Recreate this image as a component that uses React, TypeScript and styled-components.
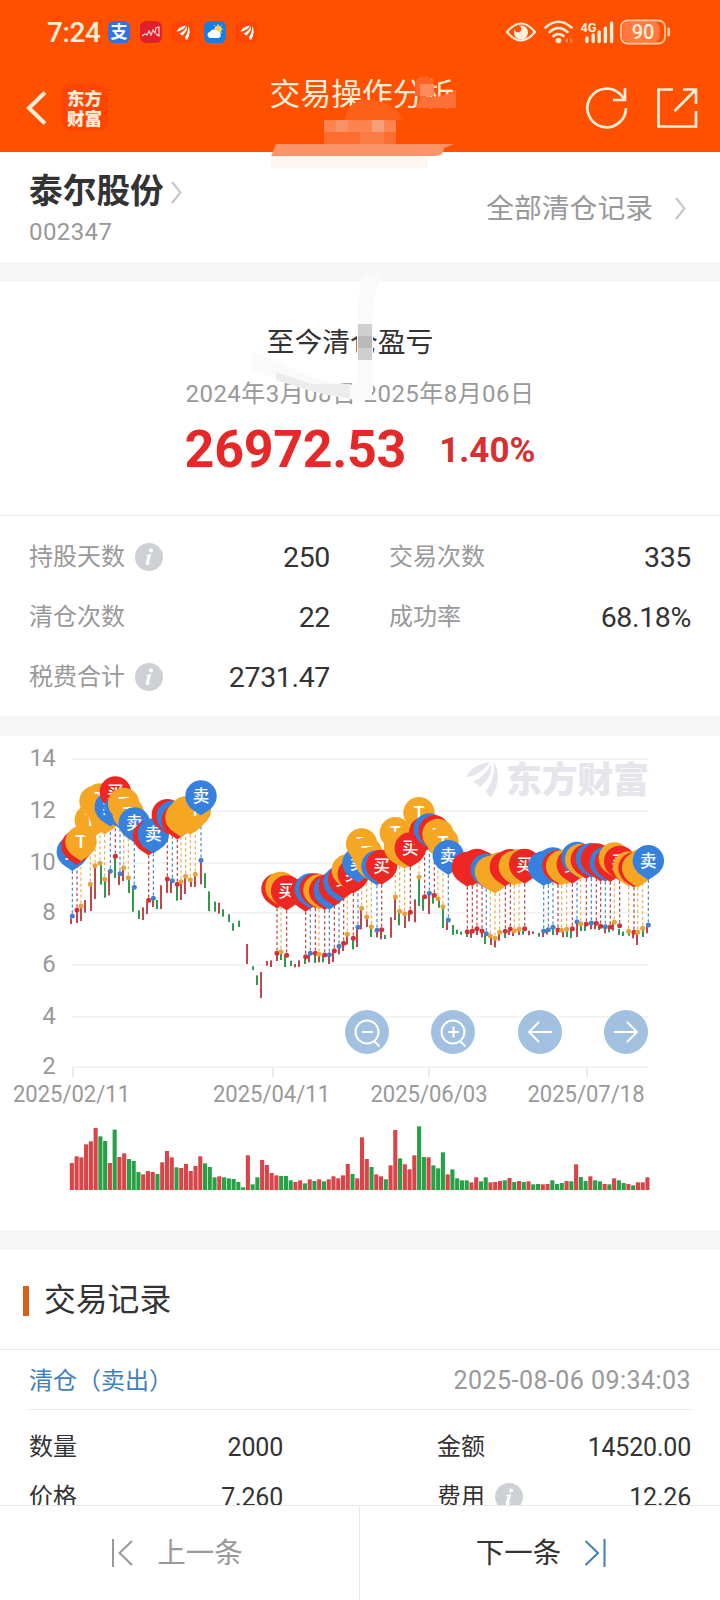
import React from "react";
import styled, { createGlobalStyle } from "styled-components";

const GlobalStyle = createGlobalStyle`
  * { box-sizing: border-box; }
  body { margin: 0; background: #fff; }
`;

const FONT = 'Roboto, "Noto Sans CJK SC", sans-serif';
const CREAM = "#ffeeda";

const Page = styled.div`
  position: relative;
  width: 720px;
  height: 1600px;
  overflow: hidden;
  display: flex;
  flex-direction: column;
  background: #fff;
  font-family: ${FONT};
  color: #333;
  line-height: 1;
`;

const Header = styled.header`
  flex: none;
  height: 152px;
  background: #ff5000;
  color: ${CREAM};
`;

const StatusBar = styled.div`
  height: 64px;
  padding: 0 49px 0 47px;
  display: flex;
  align-items: center;
  justify-content: space-between;
`;

const StatusGroup = styled.div`
  display: flex;
  align-items: center;
`;

const Clock = styled.span`
  width: 61px;
  padding-top: 2px;
  font-size: 28px;
  font-weight: 500;
  letter-spacing: -0.4px;
`;

const AppIcons = styled.div`
  display: flex;
  gap: 10px;
`;

const AppIcon = styled.span<{ $bg: string }>`
  width: 22px;
  height: 22px;
  border-radius: 6px;
  background: ${(p) => p.$bg};
  color: #fff;
  font-size: 17px;
  font-weight: 700;
  display: flex;
  align-items: center;
  justify-content: center;
`;

const NavBar = styled.div`
  height: 88px;
  padding: 0 22px 0 26px;
  display: flex;
  justify-content: space-between;
`;

const NavLeft = styled.div`
  width: 112px;
  display: flex;
  gap: 15px;
  padding-top: 20px;
`;

const Brand = styled.div`
  width: 47px;
  height: 47px;
  border-radius: 11px;
  background: #ff4503;
  display: flex;
  flex-direction: column;
  align-items: center;
  justify-content: center;
  font: 900 17.5px/20px "Noto Sans CJK SC", sans-serif;
`;

const Title = styled.h1`
  margin: 15px 0 0;
  white-space: nowrap;
  font-size: 30.8px;
  line-height: 32px;
  font-weight: 400;
`;

const NavRight = styled.div`
  width: 112px;
  display: flex;
  justify-content: space-between;
  padding-top: 22px;
`;

const StockRow = styled.section`
  flex: none;
  height: 110px;
  padding: 4px 34px 0 29px;
  display: flex;
  justify-content: space-between;
  align-items: center;
`;

const StockName = styled.div`
  display: flex;
  align-items: center;
  gap: 7px;
  height: 40px;
  font-size: 33.7px;
  font-weight: 700;
`;

const StockCode = styled.div`
  margin-top: 6px;
  height: 28px;
  line-height: 28px;
  font-size: 24px;
  letter-spacing: 0.4px;
  color: #999;
`;

const AllRecords = styled.div`
  display: flex;
  align-items: center;
  gap: 22px;
  font-size: 27.8px;
  color: #999;
`;

const Gap = styled.div`
  flex: none;
  height: 20px;
  background: #f7f7f7;
`;

const Summary = styled.section`
  flex: none;
  height: 234px;
  border-bottom: 1px solid #e8e8e8;
  display: flex;
  flex-direction: column;
  align-items: center;
`;

const SummaryTitle = styled.div`
  margin: 45px 20px 0 0;
  font-size: 27.8px;
  line-height: 32px;
`;

const Period = styled.div`
  margin-top: 21px;
  font-size: 24px;
  line-height: 28px;
  letter-spacing: 0.45px;
  color: #999;
`;

const Profit = styled.div`
  margin-top: 11px;
  display: flex;
  align-items: center;
  gap: 33px;
  height: 62px;
  font-weight: 700;
  color: #e62828;
`;

const Amount = styled.span`
  font-size: 52px;
  letter-spacing: -0.3px;
`;

const Rate = styled.span`
  font-size: 35px;
  color: #d63030;
`;

const Stats = styled.section`
  flex: none;
  height: 200px;
  padding: 11px 29px 0;
  display: grid;
  grid-template-columns: 301px 302px;
  grid-auto-rows: 60px;
  column-gap: 59px;
`;

const Stat = styled.div`
  display: flex;
  align-items: center;
  justify-content: space-between;
`;

const Label = styled.span<{ $dark?: boolean }>`
  display: flex;
  align-items: center;
  gap: 10px;
  font-size: 24px;
  color: ${(p) => (p.$dark ? "#333" : "#999")};
`;

const StatValue = styled.span`
  padding-top: 2px;
  font-size: 28.5px;
  letter-spacing: -0.35px;
`;

const ChartSection = styled.section`
  position: relative;
  flex: none;
  height: 494px;
`;

const ChartControls = styled.div`
  position: absolute;
  left: 345px;
  right: 72px;
  top: 274px;
  display: flex;
  justify-content: space-between;
`;

const RoundButton = styled.button`
  width: 44px;
  height: 44px;
  padding: 0;
  border: 0;
  border-radius: 50%;
  background: rgba(139, 177, 218, 0.8);
`;

const SectionTitle = styled.h2`
  flex: none;
  margin: 0;
  height: 100px;
  padding: 2px 0 0 23px;
  border-bottom: 1px solid #e8e8e8;
  display: flex;
  align-items: center;
  gap: 15px;
  font-size: 31.8px;
  font-weight: 400;
  &::before {
    content: "";
    width: 6px;
    height: 30px;
    background: #d9601a;
  }
`;

const RecordHead = styled.div`
  flex: none;
  margin: 0 29px;
  padding-top: 2px;
  height: 60px;
  border-bottom: 1px solid #e8e8e8;
  display: flex;
  align-items: center;
  justify-content: space-between;
  font-size: 24px;
  color: #4080c0;
`;

const Time = styled.time`
  color: #999;
  font-size: 25px;
  letter-spacing: 0.45px;
`;

const RecordGrid = styled.div`
  flex: 1;
  min-height: 0;
  overflow: hidden;
  padding: 12px 29px 0;
  display: grid;
  grid-template-columns: 254px 254px;
  grid-auto-rows: 50px;
  justify-content: space-between;
`;

const RecordValue = styled.span`
  font-size: 25px;
  letter-spacing: -0.2px;
`;

const Footer = styled.footer`
  flex: none;
  height: 95px;
  border-top: 1px solid #e8e8e8;
  display: grid;
  grid-template-columns: 360px 360px;
  background: #fff;
`;

const FooterButton = styled.button<{ $muted?: boolean }>`
  border: 0;
  border-right: ${(p) => (p.$muted ? "1px solid #e8e8e8" : "0")};
  background: none;
  padding: ${(p) => (p.$muted ? "0 5px 0 0" : "0 0 0 3px")};
  display: flex;
  align-items: center;
  justify-content: center;
  gap: 23px;
  font: 400 28.5px/1 ${FONT};
  color: ${(p) => (p.$muted ? "#999" : "#333")};
`;

const FooterText = styled.span`
  padding-top: 3px;
`;

const Smudge = styled.svg`
  position: absolute;
  left: 0;
  top: 0;
  pointer-events: none;
`;

const Chevron = () => (
  <svg width="11" height="23" viewBox="0 0 11 23" fill="none">
    <path d="M1 1 L9.5 11.5 L1 22" stroke="#c4c4c4" strokeWidth="2" />
  </svg>
);

const Info = () => (
  <svg width="28" height="28" viewBox="0 0 28 28">
    <circle cx="14" cy="14" r="14" fill="#cdd1d6" />
    <circle cx="16" cy="7.4" r="2" fill="#fff" />
    <path
      d="M11 12.2 Q14 11.6 16.3 11 L13.9 19.4 Q13.5 21 14.8 20.3 L16.5 18.8 Q14.6 22.2 12.2 22.3 Q10.2 22.2 10.9 19.5 L12.7 13.3 Q12.5 12.8 11 12.9 Z"
      fill="#fff"
    />
  </svg>
);

const FeatherPaths = () => (
  <>
    <path d="M0 16 Q5 4 24 1 Q19 9 9 14 Q5 15.5 0 16 Z" />
    <path d="M7 21 Q21 14 24.5 3 Q28 14 14 26 Q11 22.5 7 21 Z" />
    <path d="M28 1 Q37 17 25.5 36 Q22 35 20 30 Q29.5 18 28 1 Z" />
  </>
);

const Feather = () => (
  <svg width="15" height="15" viewBox="0 0 34 36" fill="#fff">
    <FeatherPaths />
  </svg>
);

type Kind = "B" | "S" | "T";
type Marker = [number, number, Kind];

const PIN: Record<Kind, { fill: string; line: string; dot: string; text: string }> = {
  B: { fill: "#ee2722", line: "#c43c42", dot: "#cf3136", text: "买" },
  S: { fill: "#3681de", line: "#4a86cc", dot: "#477fc6", text: "卖" },
  T: { fill: "#f5a623", line: "#e2b252", dot: "#e5a13a", text: "T" },
};

/* Each block holds positions in thirds of a pixel from its own origin. */
const place = (ox: number, oy: number, list: Marker[]): Marker[] =>
  list.map(([x, y, k]) => [ox + x / 3, oy + y / 3, k]);

const MARKERS: Marker[] = [
  ...place(0, 740, [
    [217, 528, "S"], [231, 510, "B"], [243, 498, "T"], [271, 433, "T"], [285, 377, "T"], [300, 370, "T"],
    [314, 418, "T"], [331, 394, "S"], [346, 349, "B"], [360, 401, "S"], [371, 383, "T"], [385, 413, "T"],
    [403, 442, "S"], [446, 481, "B"], [460, 475, "S"], [502, 417, "B"], [517, 422, "S"], [532, 433, "B"],
    [543, 425, "T"], [557, 409, "T"], [571, 419, "T"], [586, 403, "T"], [603, 361, "S"],
  ]),
  ...place(240, 800, [
    [111, 460, "B"], [123, 455, "T"], [140, 466, "B"], [197, 470, "B"], [211, 460, "S"], [226, 460, "B"],
    [237, 463, "T"], [254, 465, "B"], [268, 464, "S"], [283, 452, "B"], [297, 439, "S"], [311, 430, "B"],
    [322, 403, "T"], [340, 415, "B"], [354, 382, "S"], [365, 325, "T"], [380, 351, "T"], [394, 380, "T"],
    [411, 391, "S"], [425, 389, "B"], [466, 291, "T"], [479, 334, "T"], [494, 341, "T"], [511, 337, "B"],
    [537, 231, "T"], [554, 290, "B"], [568, 280, "S"], [583, 286, "B"], [594, 296, "T"], [609, 320, "T"],
    [625, 360, "S"], [682, 395, "B"],
  ]),
  ...place(470, 740, [
    [7, 573, "B"], [21, 566, "B"], [36, 573, "B"], [49, 581, "S"], [61, 588, "T"], [75, 595, "T"],
    [89, 577, "T"], [106, 574, "B"], [121, 567, "B"], [133, 572, "T"], [147, 568, "T"], [164, 566, "B"],
    [221, 573, "S"], [235, 569, "S"], [249, 562, "S"], [264, 570, "B"], [275, 571, "T"], [290, 568, "T"],
    [307, 566, "B"], [321, 545, "S"], [332, 551, "T"], [349, 552, "B"], [364, 549, "S"], [379, 550, "B"],
    [392, 559, "B"], [406, 560, "S"], [421, 561, "B"], [433, 547, "T"], [449, 557, "B"], [476, 574, "T"],
    [492, 577, "B"], [503, 577, "T"], [518, 565, "T"], [535, 555, "S"],
  ]),
];

/* A pin shows its label unless a later pin covers it completely. */
const labelled = (i: number) =>
  !MARKERS.slice(i + 1).some(([x, y]) => Math.hypot(x - MARKERS[i][0], y - MARKERS[i][1]) < 7);

type Candle = [number, number, number, "r" | "g"];
const placeC = (ox: number, oy: number, list: Candle[]): Candle[] =>
  list.map(([x, a, b, c]) => [ox + x / 3, oy + a / 3, oy + b / 3, c]);

const CANDLES: Candle[] = [
  ...placeC(0, 740, [
    [213, 535, 552, "r"], [231, 514, 549, "r"], [243, 502, 543, "r"], [255, 480, 518, "r"], [273, 436, 513, "r"],
    [285, 380, 477, "r"], [303, 372, 434, "g"], [315, 420, 473, "g"], [327, 397, 466, "r"], [345, 350, 414, "g"],
    [357, 405, 435, "r"], [369, 390, 423, "r"], [387, 415, 459, "g"], [399, 445, 515, "g"], [417, 511, 537, "g"],
    [429, 502, 540, "r"], [441, 485, 522, "r"], [459, 475, 501, "r"], [471, 480, 507, "g"], [483, 436, 507, "r"],
    [501, 418, 459, "r"], [513, 424, 459, "r"], [531, 435, 482, "g"], [543, 425, 480, "r"], [555, 410, 462, "r"],
    [573, 420, 441, "r"], [585, 405, 441, "r"], [603, 365, 433, "r"], [615, 400, 444, "g"], [627, 454, 513, "g"],
    [645, 485, 515, "g"], [657, 488, 521, "r"], [669, 508, 530, "g"], [687, 523, 546, "g"], [699, 550, 572, "g"],
    [717, 542, 561, "g"],
  ]),
  ...placeC(240, 800, [
    [21, 432, 492, "r"], [39, 499, 510, "g"], [51, 526, 555, "g"], [63, 516, 594, "r"], [81, 483, 497, "r"],
    [93, 481, 501, "r"], [111, 460, 483, "r"], [123, 455, 480, "g"], [135, 468, 501, "g"], [153, 482, 498, "g"],
    [165, 492, 502, "r"], [177, 481, 501, "r"], [195, 472, 492, "g"], [207, 465, 487, "r"], [225, 460, 489, "g"],
    [237, 463, 487, "r"], [249, 465, 487, "g"], [267, 465, 492, "r"], [279, 455, 486, "r"], [297, 440, 463, "r"],
    [309, 430, 453, "r"], [321, 405, 434, "r"], [339, 415, 448, "g"], [351, 382, 441, "r"], [363, 327, 388, "r"],
    [381, 352, 381, "r"], [393, 382, 411, "g"], [411, 392, 412, "r"], [423, 388, 418, "r"], [435, 405, 417, "g"],
    [453, 352, 413, "r"], [465, 295, 360, "r"], [477, 335, 376, "g"], [495, 343, 384, "r"], [507, 340, 364, "r"],
    [525, 298, 367, "r"], [537, 235, 318, "g"], [549, 290, 332, "g"], [567, 282, 342, "r"], [579, 290, 311, "g"],
    [597, 297, 323, "g"], [609, 320, 384, "g"], [621, 365, 390, "r"], [639, 375, 405, "g"], [651, 389, 402, "g"],
    [663, 395, 404, "g"], [681, 398, 411, "g"], [693, 395, 413, "r"],
  ]),
  ...placeC(470, 740, [
    [3, 575, 592, "r"], [21, 570, 585, "r"], [36, 575, 592, "r"], [45, 585, 612, "g"], [63, 590, 615, "r"],
    [75, 595, 622, "r"], [87, 578, 602, "r"], [105, 577, 594, "g"], [117, 572, 585, "r"], [129, 572, 588, "r"],
    [147, 572, 585, "r"], [159, 572, 584, "g"], [177, 572, 586, "r"], [189, 574, 582, "r"], [207, 579, 590, "g"],
    [219, 575, 591, "r"], [231, 572, 583, "r"], [249, 565, 585, "g"], [261, 568, 585, "r"], [279, 572, 592, "r"],
    [291, 570, 591, "g"], [303, 568, 594, "g"], [321, 548, 591, "r"], [333, 553, 573, "g"], [345, 555, 573, "g"],
    [363, 552, 568, "r"], [375, 552, 568, "r"], [387, 560, 570, "g"], [405, 562, 580, "r"], [417, 562, 577, "g"],
    [429, 548, 572, "r"], [447, 567, 585, "g"], [459, 575, 588, "g"], [477, 575, 587, "g"], [489, 577, 595, "r"],
    [501, 578, 615, "r"], [519, 568, 591, "g"], [531, 560, 580, "r"],
  ]),
];

/* Bar heights in thirds of a pixel, prefixed by direction. */
const VOLUMES =
  "r81 r101 r98 r137 r146 r186 g161 g147 r81 g181 r99 r110 g93 g87 g54 r47 r57 r54 g48 r83 r117 r98 g68 r66 r78 r57 r72 r101 g80 g69 g38 r41 g38 g35 g33 g24 g8 r104 g17 g38 r90 r75 r51 r44 g42 g42 g29 r24 r29 g20 r32 g27 r32 g26 r32 r41 r35 r44 r78 g48 r35 r158 r93 g69 r47 r41 g32 r74 r180 g95 r77 r62 r104 g191 g99 r98 g74 g65 g113 r47 g62 g35 g29 g29 r23 r38 g26 g38 r23 r24 r27 g29 r36 g24 r27 g24 r26 g17 g18 r17 r18 g29 g18 g21 r27 g26 r77 g39 g27 r41 g29 g26 r18 g17 r35 g29 g21 r18 g14 r23 r23 r38".split(
    " ",
  );

const GRID: [number, number][] = [[14, 759], [12, 811], [10, 863], [8, 913], [6, 965], [4, 1017], [2, 1067]];
const DATES: [string, number, number][] = [
  ["2025/02/11", 71.5, 73],
  ["2025/04/11", 271.5, 273],
  ["2025/06/03", 429, 429],
  ["2025/07/18", 586, 587],
];

const Chart = () => (
  <svg width="720" height="494" viewBox="0 736 720 494" fontFamily={FONT}>
    {GRID.map(([v, y]) => (
      <g key={v}>
        <line x1="72" x2="648" y1={y} y2={y} stroke="#f4f4f5" strokeWidth="2" />
        <text x="55" y={y + 7} textAnchor="end" fontSize="24" letterSpacing="-0.8" fill="#999">
          {v}
        </text>
      </g>
    ))}
    {DATES.map(([d, x, tick]) => (
      <g key={d}>
        <line x1={tick} x2={tick} y1="1068" y2="1077" stroke="#ebebec" strokeWidth="2" />
        <text x={x} y="1102" textAnchor="middle" fontSize="24.3" textLength="117" lengthAdjust="spacingAndGlyphs" fill="#999">
          {d}
        </text>
      </g>
    ))}
    <g fill="#e5e5eb">
      <g transform="translate(466 761)">
        <FeatherPaths />
      </g>
      <text x="506" y="793" fontSize="36" fontWeight="900" textLength="143">
        东方财富
      </text>
    </g>
    {CANDLES.map(([x, a, b, c], i) => (
      <rect key={i} x={x - 1} y={a} width="2" height={b - a} fill={c === "r" ? "#bd474c" : "#2f9a4b"} />
    ))}
    {MARKERS.map(([x, y, k], i) => (
      <g key={i}>
        <line x1={x} x2={x} y1={y - 45} y2={y} stroke={PIN[k].line} strokeWidth="1.2" strokeDasharray="3 2.6" />
        <circle cx={x} cy={y} r="2.5" fill={PIN[k].dot} />
      </g>
    ))}
    {MARKERS.map(([x, y, k], i) => (
      <g key={i} transform={`translate(${x} ${y - 64.3})`}>
        <path
          d="M-12.97 8.85 A15.7 15.7 0 1 1 12.97 8.85 C9.5 14 4 16.5 0 19.3 C-4 16.5 -9.5 14 -12.97 8.85 Z"
          fill={PIN[k].fill}
        />
        {labelled(i) && (
          <text y="6.2" textAnchor="middle" fontSize={k === "T" ? 18 : 16.5} fontWeight="500" fill="#fff">
            {PIN[k].text}
          </text>
        )}
      </g>
    ))}
    {VOLUMES.map((v, i) => {
      const h = Number(v.slice(1)) / 3;
      return (
        <rect key={i} x={69.8 + i * 4.757} y={1190 - h} width="4.1" height={h} fill={v[0] === "r" ? "#da4347" : "#27a145"} />
      );
    })}
  </svg>
);

const ICONS = {
  out: "M29 31 L34.5 36.5 M17 22 H28",
  in: "M29 31 L34.5 36.5 M17 22 H28 M22.5 16.5 V27.5",
  left: "M34 22 H11 M21 12 L11 22 L21 32",
  right: "M10 22 H33 M23 12 L33 22 L23 32",
};

const ChartButton = ({ icon }: { icon: keyof typeof ICONS }) => (
  <RoundButton>
    <svg width="44" height="44" viewBox="0 0 44 44" fill="none" stroke="#fff" strokeWidth="2">
      {(icon === "in" || icon === "out") && <circle cx="22" cy="22" r="11.5" />}
      <path d={ICONS[icon]} />
    </svg>
  </RoundButton>
);

const StatusIcons = () => (
  <svg width="166" height="28" viewBox="505 18 166 28" fill="none" stroke={CREAM}>
    <path d="M507 32 Q521 15 535 32 Q521 49 507 32 Z" strokeWidth="2.2" />
    <circle cx="521" cy="32.5" r="7" fill={CREAM} stroke="none" />
    <circle cx="518" cy="29" r="3.2" fill="#ff5000" stroke="none" />
    <g strokeWidth="2.6" strokeLinecap="round">
      <path d="M545.5 27.5 Q558.5 16 571.5 27.5" />
      <path d="M549.5 32 Q558.5 24 567.5 32" />
      <path d="M553.5 36 Q558.5 32 563.5 36" />
    </g>
    <circle cx="558.5" cy="40.5" r="2.8" fill={CREAM} stroke="none" />
    <path d="M568 37.5 l-3 3 3 3z M570 37.5 l3 3 -3 3z" fill="#ff8650" stroke="none" />
    <text x="580.5" y="31.5" fontSize="12.5" fontWeight="700" fill={CREAM} stroke="none" textLength="16" lengthAdjust="spacingAndGlyphs">
      4G
    </text>
    <path d="M587 38 V41.5 M593.2 35 V41.5 M599.2 32 V41.5 M605.4 28 V41.5 M611.6 23 V41.5" strokeWidth="3.4" strokeLinecap="round" />
    <rect x="621" y="20.5" width="44" height="23" rx="6.5" fill="#ff5000" strokeWidth="1.8" stroke="#ffc8a0" />
    <rect x="622.5" y="22" width="37" height="20" rx="5" fill="#ff7a40" stroke="none" />
    <path d="M668.7 29 V35" strokeWidth="2.8" strokeLinecap="round" stroke="#ffc8a0" />
    <text x="643" y="39.3" fontSize="20" fontWeight="500" textAnchor="middle" fill={CREAM} stroke="none">
      90
    </text>
  </svg>
);

export default function App() {
  return (
    <Page>
      <GlobalStyle />
      <Header>
        <StatusBar>
          <StatusGroup>
            <Clock>7:24</Clock>
            <AppIcons>
              <AppIcon $bg="#2f74df">支</AppIcon>
              <AppIcon $bg="#e0202c">
                <svg width="20" height="12" viewBox="0 0 20 12" fill="none" stroke="#ffd9d9" strokeWidth="1.2">
                  <path d="M1 10 L4 8 L6 9 L8 5 L10 9 L12 4 L14 7 L15 2 L18 1 V10 L15 8" />
                </svg>
              </AppIcon>
              <AppIcon $bg="#ff4503"><Feather /></AppIcon>
              <AppIcon $bg="#137fe6">
                <svg width="20" height="20" viewBox="0 0 20 20">
                  <path d="M13 2v2M18 7h-2M17 3l-1.5 1.5M9 3l1.2 1.2M17 11l-1.5-1" stroke="#ffd45c" />
                  <circle cx="13" cy="7.4" r="3.6" fill="#ffd45c" />
                  <path d="M5.5 16 A3.2 3.2 0 0 1 5 9.7 A4.5 4.5 0 0 1 12.8 9.6 A3.3 3.3 0 0 1 13.6 16 Z" fill="#fff" />
                </svg>
              </AppIcon>
              <AppIcon $bg="#ff4503"><Feather /></AppIcon>
            </AppIcons>
          </StatusGroup>
          <StatusIcons />
        </StatusBar>
        <NavBar>
          <NavLeft>
            <svg width="20" height="47" viewBox="0 0 20 47" fill="none" stroke={CREAM} strokeWidth="4">
              <path d="M19 8.5 L3 24 L19 39.5" />
            </svg>
            <Brand>
              <span>东方</span>
              <span>财富</span>
            </Brand>
          </NavLeft>
          <Title>交易操作分析</Title>
          <NavRight>
            <svg width="42" height="44" viewBox="0 0 42 44" fill="none" stroke={CREAM} strokeWidth="2.7">
              <path d="M40 22 A19.3 19.3 0 1 1 35 9 L39 14" />
              <path d="M39 2 V14 H27" />
            </svg>
            <svg width="42" height="44" viewBox="0 0 42 44" fill="none" stroke={CREAM} strokeWidth="2.7">
              <path d="M17 3.5 H2.5 V40.5 H40 V25" />
              <path d="M27 3.5 H40 V18 M39 4.5 L18.5 25" />
            </svg>
          </NavRight>
        </NavBar>
      </Header>

      <StockRow>
        <div>
          <StockName>
            泰尔股份
            <Chevron />
          </StockName>
          <StockCode>002347</StockCode>
        </div>
        <AllRecords>
          全部清仓记录
          <Chevron />
        </AllRecords>
      </StockRow>
      <Gap />

      <Summary>
        <SummaryTitle>至今清仓盈亏</SummaryTitle>
        <Period>2024年3月08日-2025年8月06日</Period>
        <Profit>
          <Amount>26972.53</Amount>
          <Rate>1.40%</Rate>
        </Profit>
      </Summary>
      <Stats>
        <Stat><Label>持股天数<Info /></Label><StatValue>250</StatValue></Stat>
        <Stat><Label>交易次数</Label><StatValue>335</StatValue></Stat>
        <Stat><Label>清仓次数</Label><StatValue>22</StatValue></Stat>
        <Stat><Label>成功率</Label><StatValue>68.18%</StatValue></Stat>
        <Stat><Label>税费合计<Info /></Label><StatValue>2731.47</StatValue></Stat>
      </Stats>
      <Gap />

      <ChartSection>
        <Chart />
        <ChartControls>
          <ChartButton icon="out" />
          <ChartButton icon="in" />
          <ChartButton icon="left" />
          <ChartButton icon="right" />
        </ChartControls>
      </ChartSection>
      <Gap />

      <SectionTitle>交易记录</SectionTitle>
      <RecordHead>
        清仓（卖出）
        <Time>2025-08-06 09:34:03</Time>
      </RecordHead>
      <RecordGrid>
        <Stat><Label $dark>数量</Label><RecordValue>2000</RecordValue></Stat>
        <Stat><Label $dark>金额</Label><RecordValue>14520.00</RecordValue></Stat>
        <Stat><Label $dark>价格</Label><RecordValue>7.260</RecordValue></Stat>
        <Stat><Label $dark>费用<Info /></Label><RecordValue>12.26</RecordValue></Stat>
      </RecordGrid>
      <Footer>
        <FooterButton $muted>
          <svg width="23" height="28" viewBox="0 0 23 28" fill="none" stroke="#999" strokeWidth="2">
            <path d="M2 0 V28 M21 2 L8.5 14 L21 26" />
          </svg>
          <FooterText>上一条</FooterText>
        </FooterButton>
        <FooterButton>
          <FooterText>下一条</FooterText>
          <svg width="23" height="28" viewBox="0 0 23 28" fill="none" stroke="#3f7fb8" strokeWidth="2">
            <path d="M20.5 0 V28 M1.5 2 L14 14 L1.5 26" />
          </svg>
        </FooterButton>
      </Footer>

      <Smudge width="720" height="420" viewBox="0 0 720 420">
        <path d="M345 120 Q346 100 368 100 Q388 100 398 112 L404 120 Z" fill="#ff6019" />
        <path d="M415 82 Q418 75 426 76 Q434 78 434 88 V96 H415 Z" fill="#ff6426" />
        <rect x="420" y="84" width="14" height="12" fill="#ff8a5c" />
        <path d="M434 97 Q444 97 456 90 V108 H414 Q420 104 420 96 Z" fill="#ff7038" />
        <rect x="324" y="120" width="72" height="12" fill="#fd8450" />
        <rect x="336" y="120" width="12" height="12" fill="#f99166" />
        <rect x="372" y="120" width="12" height="12" fill="#f5a078" />
        <rect x="324" y="132" width="72" height="12" fill="#fc6d30" />
        <rect x="360" y="132" width="24" height="12" fill="#fc7c46" />
        <path d="M276 144 H454 L444 148 Q444 155 436 156 H271 Z" fill="#fd9468" />
        <path d="M271 156 H428 V168 H271 Z" fill="#fff6f2" />
        <path d="M364 276 H381 Q374 292 373 315 V392 H357 V315 Q358 290 364 276 Z" fill="#fafafa" />
        <path d="M252 352 L264 355 L300 372 Q330 384 364 386 H372 V400 H355 Q300 388 252 370 Z" fill="#fafafa" />
        <path d="M276 372 L312 384 H350 V399 Q315 394 276 380 Z" fill="#ececec" />
        <rect x="358" y="324" width="14" height="12" fill="#cfcfcf" />
        <rect x="358" y="336" width="14" height="12" fill="#b9b9b9" />
        <rect x="358" y="348" width="14" height="12" fill="#cfcfcf" />
      </Smudge>
    </Page>
  );
}
